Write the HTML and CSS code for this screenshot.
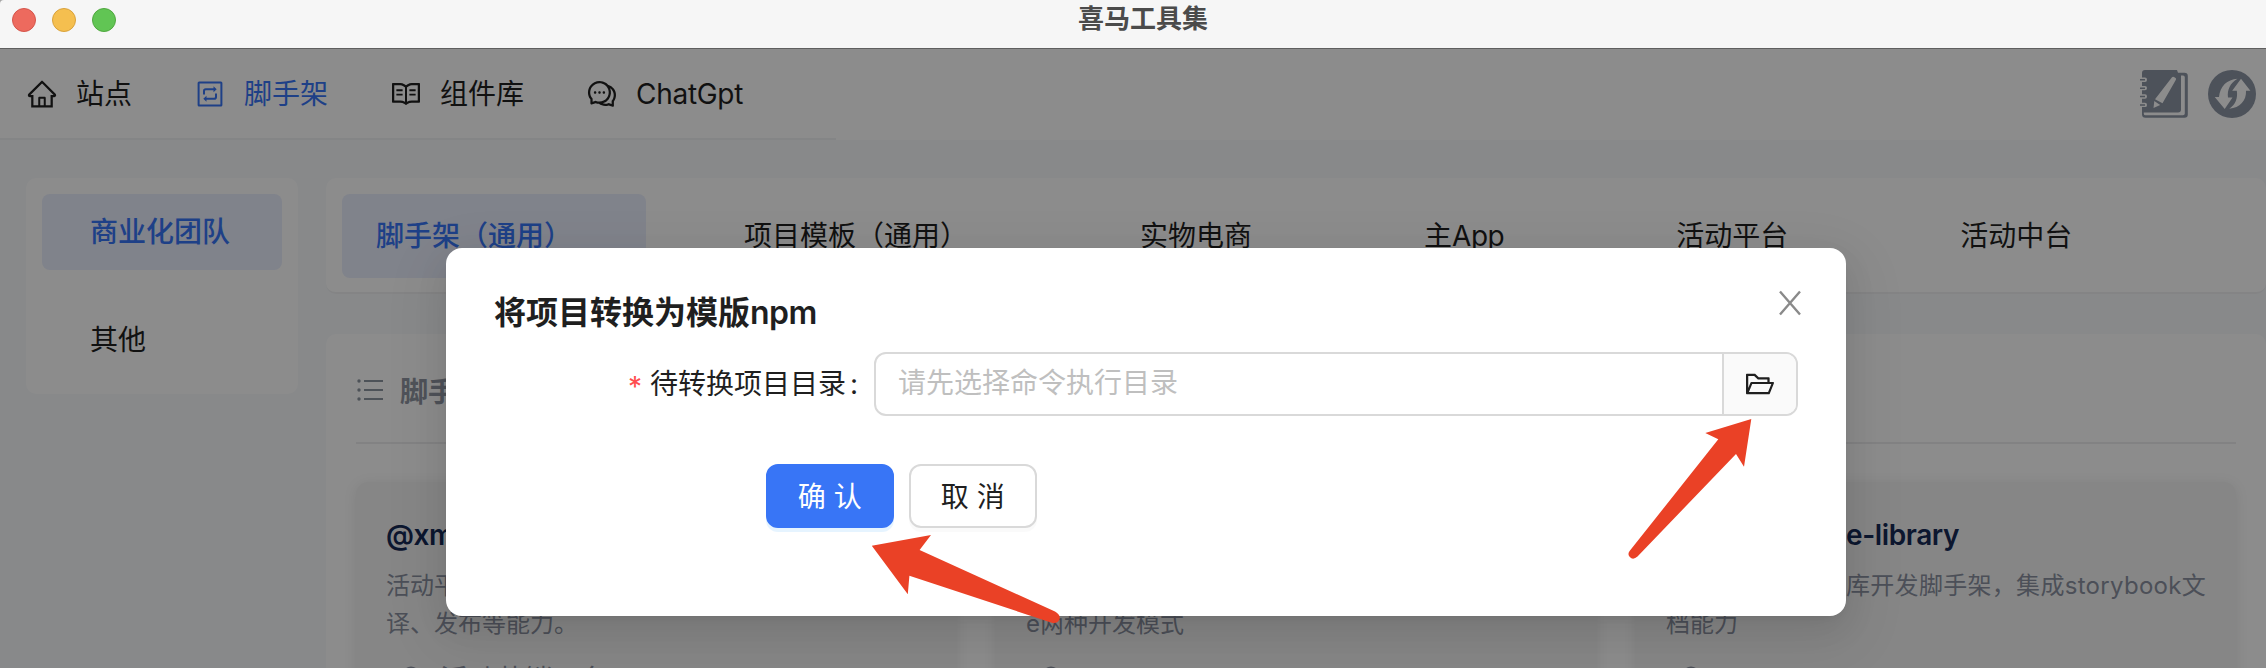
FILE: index.html
```html
<!DOCTYPE html>
<html lang="zh-CN">
<head>
<meta charset="utf-8">
<title>喜马工具集</title>
<link rel="stylesheet" href="styles.css">
</head>
<body>
<div class="window">
  <header class="titlebar">
    <div class="lights"><i class="light red"></i><i class="light yellow"></i><i class="light green"></i></div>
    <div class="window-title">喜马工具集</div>
  </header>
  <div class="app">
    <nav class="topbar">
      <div class="menu">
        <a class="menu-item"><svg class="icon" viewBox="0 0 1024 1024"><path d="M946.5 505L560.1 118.8l-25.9-25.9a31.5 31.5 0 00-44.4 0L77.5 505a63.9 63.9 0 00-18.8 46c.4 35.2 29.7 63.3 64.9 63.3h42.5V940h691.8V614.3h43.4c17.1 0 33.2-6.7 45.3-18.8a63.6 63.6 0 0018.7-45.3c0-17-6.7-33.1-18.8-45.2zM568 868H456V664h112v204zm217.9-325.7V868H632V640c0-22.1-17.9-40-40-40H432c-22.1 0-40 17.9-40 40v228H238.1V542.3h-96l370-369.7 23.1 23.1L882 542.3h-96.1z"/></svg><span>站点</span></a>
        <a class="menu-item selected"><svg class="icon line" viewBox="0 0 32 32"><rect x="4.6" y="4.6" width="22.8" height="22.8" rx=".5"/><path d="M10 16.5v-3.4q0-1.8 1.8-1.8H20M22 15.500v3.400q0 1.800-1.800 1.800H12"/><path class="solid" d="M19.500 8.300v6l3.200-3zM12.500 17.700v6l-3.200-3z"/></svg><span>脚手架</span></a>
        <a class="menu-item"><svg class="icon" viewBox="0 0 1024 1024"><path d="M928 161H699.2c-49.1 0-97.1 14.1-138.4 40.7L512 233l-48.8-31.3A255.2 255.2 0 00324.8 161H96c-17.7 0-32 14.3-32 32v568c0 17.7 14.3 32 32 32h228.8c49.1 0 97.1 14.1 138.4 40.7l44.4 28.6c1.3.8 2.8 1.3 4.3 1.3s3-.4 4.3-1.3l44.4-28.6C602 807.1 650.1 793 699.2 793H928c17.7 0 32-14.3 32-32V193c0-17.7-14.3-32-32-32zM324.8 721H136V233h188.8c35.4 0 69.8 10.1 99.5 29.2l48.8 31.3 6.9 4.5v462c-47.6-25.6-100.8-39-155.2-39zm563.2 0H699.2c-54.4 0-107.6 13.4-155.2 39V298l6.9-4.5 48.800-31.300c29.700-19.100 64.100-29.200 99.500-29.200H888v488zM396.900 361H211.100c-3.900 0-7.100 3.400-7.100 7.500v45c0 4.100 3.200 7.500 7.100 7.500h185.700c3.900 0 7.100-3.400 7.100-7.500v-45c.1-4.100-3.100-7.500-7-7.500zm223.100 7.500v45c0 4.100 3.200 7.500 7.100 7.500h185.700c3.900 0 7.100-3.400 7.100-7.500v-45c0-4.100-3.200-7.500-7.100-7.500H627.100c-3.900 0-7.100 3.400-7.100 7.500zM396.900 501H211.100c-3.900 0-7.100 3.400-7.100 7.500v45c0 4.100 3.200 7.500 7.100 7.500h185.700c3.900 0 7.100-3.400 7.100-7.500v-45c.1-4.100-3.100-7.500-7-7.500zm416 0H627.100c-3.900 0-7.100 3.400-7.100 7.500v45c0 4.100 3.200 7.500 7.100 7.500h185.700c3.900 0 7.100-3.400 7.100-7.500v-45c.1-4.100-3.100-7.500-7-7.500z"/></svg><span>组件库</span></a>
        <a class="menu-item"><svg class="icon" viewBox="0 0 1024 1024"><path d="M573 421c-23.1 0-41 17.900-41 40s17.900 40 41 40c21.100 0 39-17.900 39-40s-17.900-40-39-40zm-280 0c-23.100 0-41 17.900-41 40s17.900 40 41 40c21.100 0 39-17.900 39-40s-17.900-40-39-40z"/><path d="M894 345a343.920 343.920 0 00-189-130v.1c-17.100-19-36.400-36.500-58-52.100-163.700-119-393.500-82.700-513 81-96.300 133-92.200 311.900 6 439l.8 132.600c0 3.200.5 6.400 1.500 9.400a31.950 31.950 0 0040.100 20.900L309 806c33.500 11.900 68.100 18.700 102.500 20.600l-.5.4c89.100 64.900 205.900 84.400 313 49l127.100 41.400c3.200 1 6.500 1.600 9.900 1.600 17.700 0 32-14.300 32-32V753c88.100-119.600 90.400-284.900 1-408zM323 735l-12-5-99 31-1-104-8-9c-84.600-103.200-90.200-251.900-11-361 96.400-132.200 281.200-161.400 413-66 132.200 96.100 161.500 280.600 66 412-80.100 109.900-223.500 150.500-348 102zm505-17l-8 10 1 104-98-33-12 5c-56 20.800-115.700 22.500-171 7l-.2-.1A367.310 367.310 0 00729 676c76.400-105.300 88.800-237.600 44.400-350.400l.6.4c23 16.500 44.100 37.100 62 62 72.600 99.600 68.500 235.200-8 330z"/><path d="M433 421c-23.100 0-41 17.900-41 40s17.900 40 41 40c21.100 0 39-17.900 39-40s-17.900-40-39-40z"/></svg><span class="latin">ChatGpt</span></a>
      </div>
      <div class="tools">
        <svg class="tool" viewBox="0 0 48 48">
          <path class="ink" d="M38 2.700h6.500q3.300 0 3.300 3.300v38.500q0 3.300-3.300 3.300H5.500q-3.500 0-3.500-3.500V3q0-3 3-3h32z"/>
          <path class="paper" d="M41 5.500h2q1.800 0 1.800 1.800v36.200q0 1.800-1.800 1.800H5.500q-1.700 0-1.700-1.500v-1.300H38q3 0 3-3z"/>
          <path class="paper" d="M32 7.300q.8-1 2-.3l1.500 1q1 .8.4 1.800L22.500 33.300 15 29.300zM14.300 31l5.900 3.900-6.700 3.200z"/>
          <path class="paper" d="M0 7.500h5q2 0 2 2.200t-2 2.200H0zM0 15.900h5q2 0 2 2.200t-2 2.200H0zM0 24.300h5q2 0 2 2.200t-2 2.200H0zM0 32.700h5q2 0 2 2.200t-2 2.200H0z"/>
          <path class="ink" d="M0 9h5v1.500H0zM0 17.400h5v1.500H0zM0 25.800h5v1.500H0zM0 34.200h5v1.500H0z"/>
        </svg>
        <svg class="tool" viewBox="0 0 48 48">
          <circle class="ink" cx="24" cy="24" r="24"/>
          <path class="paper" d="M29.500 8.700C19 9.500 12 16 11 27H6.700l10 12 7.800-11.500H20C19 20 22 13 29.500 8.700z"/>
          <path class="paper" d="M33 8.800l9.400 12H38c.5 10-6 17-16.700 17.900C27.500 35 30 28 28.800 20.800H24.200z"/>
        </svg>
      </div>
    </nav>
    <main class="main">
      <aside class="teams">
        <div class="team current">商业化团队</div>
        <div class="team">其他</div>
      </aside>
      <section class="content">
        <div class="tabs">
          <div class="tab current">脚手架（通用）</div>
          <div class="tab">项目模板（通用）</div>
          <div class="tab">实物电商</div>
          <div class="tab">主<span class="latin">App</span></div>
          <div class="tab">活动平台</div>
          <div class="tab">活动中台</div>
        </div>
        <div class="panel">
          <div class="panel-head">
            <svg class="list-icon" viewBox="0 0 28 28"><path d="M8 5h19M8 14h19M8 23h19"/><circle cx="3" cy="5" r="1.700"/><circle cx="3" cy="14" r="1.700"/><circle cx="3" cy="23" r="1.700"/></svg>
            <span>脚手架</span>
          </div>
          <div class="cards">
            <article class="card">
              <h3>@xmly</h3>
              <p>活动平台<br>译、发布等能力。</p>
              <div class="owner"><svg class="user" viewBox="0 0 28 28"><circle cx="14" cy="9" r="7.500"/><path d="M3 27q1-10 11-10t11 10"/></svg>活动营销平台</div>
            </article>
            <article class="card">
              <h3>@xmly</h3>
              <p>活动平台<br>e两种开发模式</p>
              <div class="owner"><svg class="user" viewBox="0 0 28 28"><circle cx="14" cy="9" r="7.500"/><path d="M3 27q1-10 11-10t11 10"/></svg>hubaol</div>
            </article>
            <article class="card">
              <h3 class="tail">e-library</h3>
              <p><span class="tail spaced">库开发脚手架，集成storybook文</span><br>档能力</p>
              <div class="owner"><svg class="user" viewBox="0 0 28 28"><circle cx="14" cy="9" r="7.500"/><path d="M3 27q1-10 11-10t11 10"/></svg>hubaol</div>
            </article>
          </div>
        </div>
      </section>
    </main>
    <div class="mask"></div>
  </div>

  <div class="modal">
    <div class="modal-head">
      <h2>将项目转换为模版<span>npm</span></h2>
      <svg class="close" viewBox="0 0 24 26"><path d="M2 1.500l20 23M22 1.500l-20 23"/></svg>
    </div>
    <div class="field">
      <label><b>*</b><span>待转换项目目录</span><em>:</em></label>
      <div class="input">
        <div class="placeholder">请先选择命令执行目录</div>
        <div class="addon"><svg class="icon" viewBox="0 0 1024 1024"><path d="M928 444H820V330.400c0-17.700-14.300-32-32-32H473L355.700 186.200a8.150 8.150 0 00-5.500-2.200H96c-17.700 0-32 14.300-32 32v592c0 17.700 14.300 32 32 32h698c13 0 24.800-7.900 29.700-20l134-332c1.500-3.800 2.300-7.900 2.300-12 0-17.700-14.300-32-32-32zM136 256h188.500l119.600 114.400H748V444H238c-13 0-24.800 7.900-29.700 20L136 643.200V256zm635.300 512H159l103.300-256h612.400L771.300 768z"/></svg></div>
      </div>
    </div>
    <div class="actions">
      <button class="btn primary"><span>确</span><span>认</span></button>
      <button class="btn"><span>取</span><span>消</span></button>
    </div>
  </div>

  <svg class="arrows" viewBox="0 0 2266 668">
    <path d="M871.800 545.700L931 535 919.600 550 1055 611.500Q1061 615 1059.500 619.500 1057 624.500 1051 622.500L909.400 575.700 907.800 594.300z"/>
    <path d="M1751.300 419L1744 466.700 1736 454 1637.500 556.500Q1633 560.500 1629.800 557 1627 554 1630 550.500L1718.300 439.300 1705.300 433z"/>
  </svg>
</div>
</body>
</html>
```

FILE: styles.css
```css
* { box-sizing: border-box; margin: 0; padding: 0; }
body {
  background: #a5a5a5;
  font-family: Inter, "Noto Sans CJK SC", sans-serif;
  font-size: 28px;
  color: #1f1f1f;
  overflow: hidden;
}
.window {
  position: relative;
  width: 2266px;
  height: 668px;
  overflow: hidden;
  border-radius: 4px 0 0 0;
  display: flex;
  flex-direction: column;
}
.titlebar {
  height: 48px;
  flex: none;
  display: flex;
  background: #f6f6f6;
}
.lights { display: flex; gap: 16px; padding: 8px 0 0 12px; width: 1078px; }
.light { width: 24px; height: 24px; border-radius: 50%; border: 1px solid; }
.red { background: #ed6a5e; border-color: #d5554b; }
.yellow { background: #f5bf4f; border-color: #d9a23c; }
.green { background: #61c554; border-color: #50a83f; }
.window-title { font-size: 26px; line-height: 38px; font-weight: 700; color: #4b4b4b; }

.app {
  position: relative;
  flex: 1;
  min-height: 0;
  background: #f7f9fc;
  border-top: 1px solid #5f5f5f;
}
.mask { position: absolute; inset: 0; background: rgba(0, 0, 0, .45); }

.topbar {
  height: 91px;
  background: #fff;
  display: flex;
  justify-content: space-between;
}
.menu {
  width: 836px;
  display: flex;
  align-items: center;
  gap: 62px;
  padding-left: 26px;
  border-bottom: 2px solid #f1f2f4;
}
.menu-item { display: flex; align-items: center; gap: 18px; line-height: 40px; white-space: nowrap; }
.latin { letter-spacing: -.3px; }
.selected { color: #3875f6; }
.icon { width: 32px; height: 32px; fill: currentColor; display: block; flex: none; }
.line { fill: none; stroke: currentColor; stroke-width: 2; }
.line .solid { fill: currentColor; stroke: none; }
.tools { display: flex; align-items: center; gap: 20px; padding: 0 10px 2px 0; }
.tool { width: 48px; height: 48px; display: block; }
.ink { fill: #8c95a4; }
.paper { fill: #fff; }

.main { display: flex; align-items: flex-start; gap: 28px; padding: 38px 0 0 26px; }
.teams {
  width: 272px;
  height: 216px;
  padding: 16px;
  border-radius: 10px;
  background: #fff;
  display: flex;
  flex-direction: column;
  gap: 32px;
}
.team { height: 76px; line-height: 76px; padding-left: 48px; border-radius: 8px; }
.current { background: #e9eefd; color: #3875f6; font-weight: 500; }
.content { flex: 1; display: flex; flex-direction: column; gap: 40px; }
.tabs {
  height: 116px;
  padding: 16px;
  border-radius: 10px;
  background: #fff;
  border-bottom: 2px solid #f0f1f3;
  display: flex;
  gap: 64px;
}
.tab { height: 84px; line-height: 84px; padding: 0 74px 0 34px; border-radius: 8px; white-space: nowrap; }
.tab .latin { letter-spacing: -.5px; }
.panel { height: 400px; padding: 0 30px; border-radius: 10px; background: #fff; }
.panel-head {
  height: 110px;
  border-bottom: 2px solid #ededee;
  display: flex;
  align-items: center;
  gap: 16px;
  padding-top: 3px;
  font-weight: 700;
  color: #9095a2;
}
.list-icon { width: 28px; height: 28px; stroke: #8c95a0; stroke-width: 2; fill: #8c95a0; }
.list-icon circle { stroke: none; }
.cards { display: grid; grid-template-columns: repeat(3, 600px); gap: 40px; padding-top: 38px; }
.card {
  height: 300px;
  padding: 30px;
  border-radius: 12px;
  background: #f5f5f5;
  box-shadow: 0 2px 14px rgba(0, 0, 0, .09);
}
.card h3 { font-size: 28px; line-height: 46px; font-weight: 600; color: #162a57; letter-spacing: -.4px; }
.card p { margin-top: 9px; font-size: 24px; line-height: 38px; color: #8a91a0; white-space: nowrap; }
.tail { padding-left: 180px; }
.spaced { letter-spacing: .3px; }
.owner { display: flex; align-items: center; gap: 15px; margin-top: 16px; padding-left: 11px; line-height: 42px; color: #8a91a0; }
.user { width: 28px; height: 28px; fill: none; stroke: #8a91a0; stroke-width: 2; }

.modal {
  position: absolute;
  left: 446px;
  top: 248px;
  width: 1400px;
  height: 368px;
  padding: 40px 48px;
  border-radius: 16px;
  background: #fff;
  box-shadow: 0 12px 32px rgba(0, 0, 0, .08), 0 6px 12px -8px rgba(0, 0, 0, .12), 0 18px 56px 16px rgba(0, 0, 0, .05);
}
.modal-head { display: flex; justify-content: space-between; height: 64px; }
.modal-head h2 { font-size: 32px; line-height: 49px; font-weight: 700; }
.modal-head h2 span { font-weight: 600; letter-spacing: -.5px; }
.close { width: 24px; height: 26px; margin: 2px -4px 0 0; fill: none; stroke: #8a8a8a; stroke-width: 2.400; }
.field { display: flex; height: 64px; }
.field label { width: 380px; display: flex; align-items: center; justify-content: flex-end; padding-right: 16px; line-height: 40px; }
.field b { color: #ff4d4f; font-weight: 400; margin-right: 8px; padding-top: 6px; }
.field em { font-style: normal; margin-left: 4px; }
.input { flex: 1; display: flex; border: 2px solid #d9d9d9; border-radius: 12px; overflow: hidden; }
.placeholder { flex: 1; padding-left: 22px; line-height: 59px; color: #bfbfbf; }
.addon { width: 74px; display: flex; align-items: center; justify-content: center; background: #fafafa; border-left: 2px solid #d9d9d9; }
.actions { display: flex; gap: 15.500px; padding: 48px 0 0 272px; }
.btn {
  width: 127.500px;
  height: 64px;
  display: flex;
  align-items: center;
  justify-content: center;
  gap: 8px;
  padding-bottom: 2px;
  border: 2px solid #d9d9d9;
  border-radius: 12px;
  background: #fff;
  box-shadow: 0 4px 0 rgba(0, 0, 0, .02);
  font: inherit;
  color: inherit;
}
.primary { background: #3875f6; border-color: #3875f6; color: #fff; box-shadow: 0 4px 0 rgba(5, 145, 255, .1); }

.arrows { position: absolute; inset: 0; width: 2266px; height: 668px; fill: #ea4126; }
```
